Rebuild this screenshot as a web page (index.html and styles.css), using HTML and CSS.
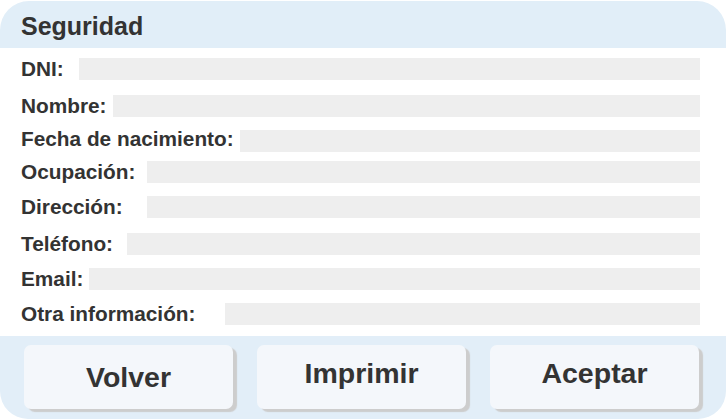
FILE: index.html
```html
<!DOCTYPE html>
<html lang="es">
<head>
<meta charset="utf-8">
<title>Seguridad</title>
<link rel="stylesheet" href="styles.css">
</head>
<body>
<div class="panel">
  <div class="header"><h1 class="title">Seguridad</h1></div>
  <div class="form">
    <div class="row row-dni"><span class="label">DNI:</span><span class="field gap-15"></span></div>
    <div class="row row-nombre"><span class="label">Nombre:</span><span class="field gap-6"></span></div>
    <div class="row row-fecha"><span class="label">Fecha de nacimiento:</span><span class="field gap-6"></span></div>
    <div class="row row-ocupacion"><span class="label">Ocupación:</span><span class="field gap-12"></span></div>
    <div class="row row-direccion"><span class="label">Dirección:</span><span class="field gap-24"></span></div>
    <div class="row row-telefono"><span class="label">Teléfono:</span><span class="field gap-14"></span></div>
    <div class="row row-email"><span class="label">Email:</span><span class="field gap-6"></span></div>
    <div class="row row-otra"><span class="label">Otra información:</span><span class="field gap-30"></span></div>
  </div>
  <div class="footer">
    <button class="btn btn-low">Volver</button>
    <button class="btn">Imprimir</button>
    <button class="btn">Aceptar</button>
  </div>
</div>
</body>
</html>
```

FILE: styles.css
```css
html, body {
  margin: 0;
  padding: 0;
  background: #ffffff;
}
body {
  font-family: "Liberation Sans", Arial, Helvetica, sans-serif;
  color: #333333;
}
.panel {
  width: 726px;
  margin-top: 1px;
  display: flex;
  flex-direction: column;
}
.header {
  height: 47px;
  background: #e1eef8;
  border-radius: 29px 29px 0 0;
  display: flex;
  align-items: center;
  padding-left: 21px;
}
.title {
  margin: 0;
  font-size: 25px;
  font-weight: bold;
  color: #333333;
  line-height: 1;
  padding-top: 3px;
}
.form {
  display: flex;
  flex-direction: column;
  padding: 0 26px 11px 21px;
}
.row {
  display: flex;
  align-items: center;
  height: 22px;
}
.row-dni { margin-top: 10px; }
.row-nombre { margin-top: 15px; }
.row-fecha { margin-top: 13px; }
.row-ocupacion { margin-top: 9px; }
.row-direccion { margin-top: 13px; }
.row-telefono { margin-top: 15px; }
.row-email { margin-top: 13px; }
.row-otra { margin-top: 13px; }
.label {
  font-size: 20.8px;
  font-weight: bold;
  white-space: nowrap;
  color: #333333;
  line-height: 1;
  flex: none;
}
.row-fecha .label { position: relative; top: -2px; }
.field {
  flex: 1;
  height: 22px;
  background: #eeeeee;
}
.gap-6 { margin-left: 6px; }
.gap-12 { margin-left: 12px; }
.gap-14 { margin-left: 14px; }
.gap-15 { margin-left: 15px; }
.gap-24 { margin-left: 24px; }
.gap-30 { margin-left: 30px; }
.footer {
  height: 83px;
  box-sizing: border-box;
  background: #e2eef8;
  border-radius: 0 0 28px 28px;
  display: flex;
  align-items: flex-start;
  gap: 24px;
  padding: 9px 0 0 24px;
}
.btn {
  width: 209px;
  height: 64px;
  border: none;
  border-radius: 7px;
  background: #f4f7fb;
  box-shadow: 4px 3px 1px #cdcdcd;
  font-family: "Liberation Sans", Arial, Helvetica, sans-serif;
  font-size: 28.5px;
  font-weight: bold;
  color: #333333;
  padding: 0 0 8px 0;
  line-height: 1;
}
.btn-low {
  padding: 0;
}
```
